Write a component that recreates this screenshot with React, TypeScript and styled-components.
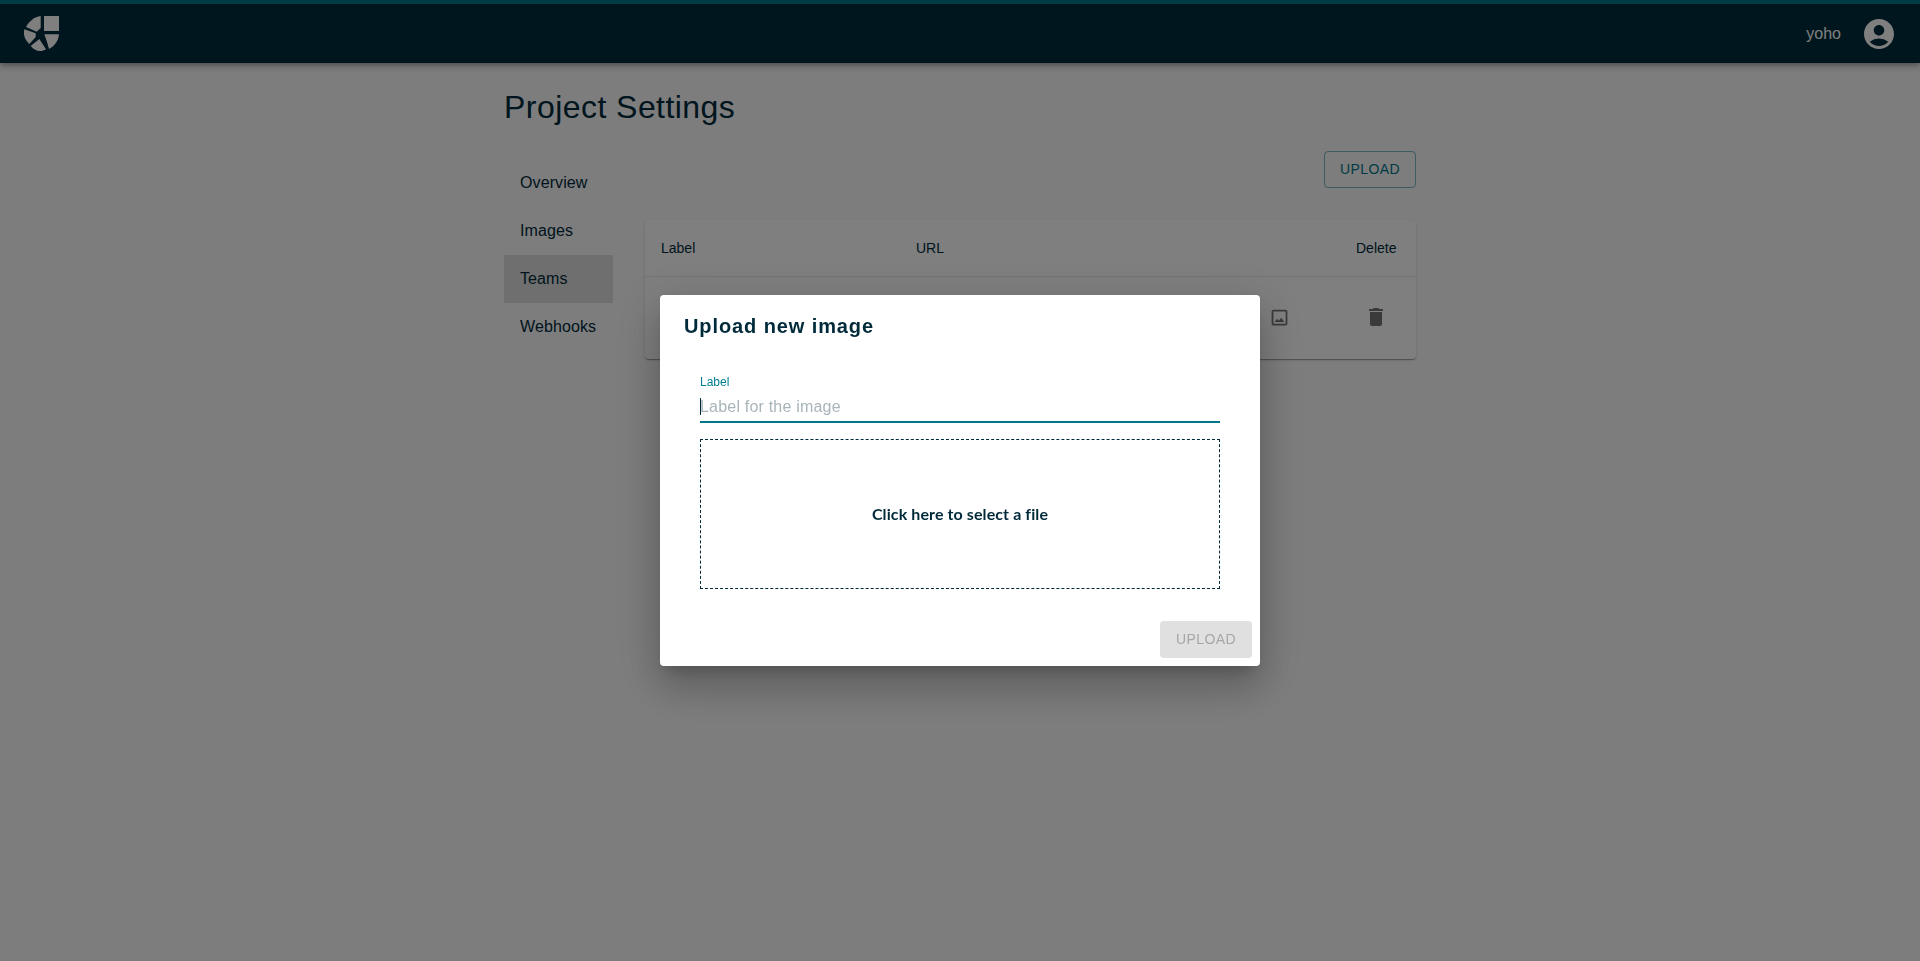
import { createGlobalStyle } from "styled-components"
import styled from "styled-components"
import { MdAccountCircle, MdCropOriginal, MdDelete } from "react-icons/md"

const GlobalStyle = createGlobalStyle`
    html, body {
        margin: 0;
        padding: 0;
        height: 100%;
        background: #fafafa;
        font-family: "Liberation Sans", Arial, sans-serif;
        color: #002a3a;
    }
`

const Page = styled.div`
    min-height: 961px;
`

const AppBar = styled.header`
    height: 58px;
    background: #002c3d;
    border-top: 4px solid #00788a;
    display: flex;
    align-items: center;
    justify-content: space-between;
    padding: 1px 23px 0 24px;
    box-shadow: 0 2px 4px -1px rgba(0, 0, 0, 0.2), 0 4px 5px rgba(0, 0, 0, 0.14), 0 1px 10px rgba(0, 0, 0, 0.12);
`

const UserArea = styled.div`
    display: flex;
    align-items: center;
    gap: 20px;
    color: #fff;
    font-size: 16px;
`

const Main = styled.main`
    width: 912px;
    margin: 0 auto;
`

const Title = styled.h1`
    margin: 25px 0 25px;
    font-size: 32px;
    line-height: 38px;
    font-weight: 400;
    letter-spacing: 0.45px;
`

const Columns = styled.div`
    display: flex;
    gap: 32px;
`

const SideNav = styled.nav`
    width: 109px;
    padding-top: 8px;
    display: flex;
    flex-direction: column;
`

const NavItem = styled.div<{ $active?: boolean }>`
    height: 48px;
    padding: 0 16px;
    display: flex;
    align-items: center;
    font-size: 16px;
    letter-spacing: 0.1px;
    background: ${(p) => (p.$active ? "#dedede" : "transparent")};
`

const Content = styled.section`
    flex: 1;
`

const Actions = styled.div`
    display: flex;
    justify-content: flex-end;
    margin-bottom: 32px;
`

const OutlineButton = styled.button`
    width: 92px;
    height: 37px;
    padding: 0 0 2px;
    border: 1px solid rgba(0, 120, 138, 0.5);
    border-radius: 4px;
    background: transparent;
    color: #00788a;
    font: 400 14px "Liberation Sans", Arial, sans-serif;
    letter-spacing: 0.4px;
`

const Card = styled.div`
    border-radius: 4px;
    background: #fff;
    box-shadow: 0 2px 1px -1px rgba(0, 0, 0, 0.2), 0 1px 1px rgba(0, 0, 0, 0.14), 0 1px 3px rgba(0, 0, 0, 0.12);
`

const Row = styled.div<{ $head?: boolean }>`
    display: grid;
    grid-template-columns: 255px 1fr 42px;
    align-items: center;
    box-sizing: border-box;
    height: ${(p) => (p.$head ? "57px" : "82px")};
    padding: 0 18px ${(p) => (p.$head ? "1px" : "2px")} 16px;
    font-size: 14px;
    border-bottom: ${(p) => (p.$head ? "1px solid #e6e6e6" : "none")};
`

const ImageCell = styled.div`
    display: flex;
    justify-content: flex-end;
    padding-right: 66px;
    color: #757575;
    grid-column: 2;
`

const DeleteCell = styled.div`
    display: flex;
    justify-content: center;
    padding-right: 2px;
    color: #757575;
    grid-column: 3;
`

const Overlay = styled.div`
    position: fixed;
    inset: 0;
    background: rgba(0, 0, 0, 0.5);
    display: flex;
    align-items: center;
    justify-content: center;
`

const Dialog = styled.div`
    width: 600px;
    height: 371px;
    box-sizing: border-box;
    background: #fff;
    border-radius: 4px;
    display: flex;
    flex-direction: column;
    box-shadow: 0 11px 15px -7px rgba(0, 0, 0, 0.2), 0 24px 38px 3px rgba(0, 0, 0, 0.14), 0 9px 46px 8px rgba(0, 0, 0, 0.12);
`

const DialogTitle = styled.h2`
    margin: 0;
    padding: 18px 24px 0;
    font-size: 20px;
    line-height: 26px;
    font-weight: 700;
    letter-spacing: 0.9px;
`

const DialogBody = styled.div`
    padding: 36px 40px 0;
`

const FieldLabel = styled.label`
    display: block;
    font-size: 12px;
    line-height: 14px;
    color: #008093;
`

const InputWrap = styled.div`
    position: relative;
`

const LabelInput = styled.input`
    display: block;
    box-sizing: border-box;
    width: 100%;
    height: 34px;
    padding: 3px 0 0;
    border: 0;
    border-bottom: 2px solid #00788a;
    outline: none;
    background: transparent;
    font: 400 16px "Liberation Sans", Arial, sans-serif;
    letter-spacing: 0.2px;
    color: #002a3a;
    &::placeholder {
        color: #a9b4ba;
        opacity: 1;
    }
`

const Caret = styled.span`
    position: absolute;
    left: 0;
    top: 9px;
    width: 1px;
    height: 17px;
    background: #002a3a;
`

const DropZone = styled.div`
    box-sizing: border-box;
    height: 150px;
    margin-top: 16px;
    padding-bottom: 2px;
    border: 1px dashed #002a3a;
    display: flex;
    align-items: center;
    justify-content: center;
    font: 700 16px Lato, "Liberation Sans", sans-serif;
    letter-spacing: 0.1px;
`

const DialogActions = styled.div`
    margin-top: auto;
    padding: 0 8px 8px;
    display: flex;
    justify-content: flex-end;
`

const DisabledButton = styled.button`
    width: 92px;
    height: 37px;
    padding: 0 0 2px;
    border: 0;
    border-radius: 4px;
    background: #e0e0e0;
    color: #a6a6a6;
    font: 400 14px "Liberation Sans", Arial, sans-serif;
    letter-spacing: 0.4px;
`

function Logo() {
    return (
        <svg width="35" height="36" viewBox="24 16 35 36" fill="#fff">
            <path d="M44 16h15v15H44z" />
            <path d="M40.700 16v12l-4 3.700L26 27c3-6 8.500-10 14.700-11z" />
            <path d="M24.300 29.300l11.400 4v3.700L29.300 44C25 40 23 35 24.300 29.300z" />
            <path d="M39.300 39l6.700 10.300c-5 3.200-11 2.200-15.300-3.300z" />
            <path d="M44.300 34.300H59c-.5 6.500-4.500 12-10 14.700l-2.300-8z" />
        </svg>
    )
}

export default function App() {
    return (
        <Page>
            <GlobalStyle />
            <AppBar>
                <Logo />
                <UserArea>
                    yoho
                    <MdAccountCircle size={36} />
                </UserArea>
            </AppBar>
            <Main>
                <Title>Project Settings</Title>
                <Columns>
                    <SideNav>
                        <NavItem>Overview</NavItem>
                        <NavItem>Images</NavItem>
                        <NavItem $active>Teams</NavItem>
                        <NavItem>Webhooks</NavItem>
                    </SideNav>
                    <Content>
                        <Actions>
                            <OutlineButton>UPLOAD</OutlineButton>
                        </Actions>
                        <Card>
                            <Row $head>
                                <span>Label</span>
                                <span>URL</span>
                                <span>Delete</span>
                            </Row>
                            <Row>
                                <ImageCell>
                                    <MdCropOriginal size={21} />
                                </ImageCell>
                                <DeleteCell>
                                    <MdDelete size={24} />
                                </DeleteCell>
                            </Row>
                        </Card>
                    </Content>
                </Columns>
            </Main>
            <Overlay>
                <Dialog>
                    <DialogTitle>Upload new image</DialogTitle>
                    <DialogBody>
                        <FieldLabel>Label</FieldLabel>
                        <InputWrap>
                            <LabelInput placeholder="Label for the image" readOnly />
                            <Caret />
                        </InputWrap>
                        <DropZone>Click here to select a file</DropZone>
                    </DialogBody>
                    <DialogActions>
                        <DisabledButton disabled>UPLOAD</DisabledButton>
                    </DialogActions>
                </Dialog>
            </Overlay>
        </Page>
    )
}
